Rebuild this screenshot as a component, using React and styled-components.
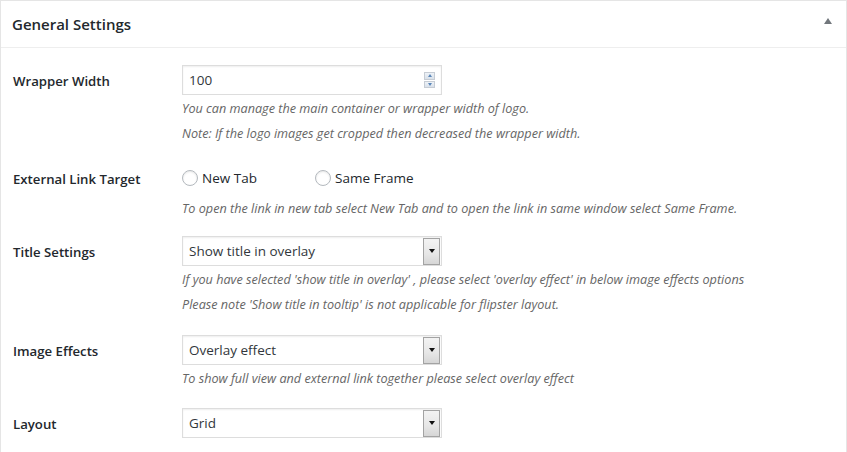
import React from "react";
import styled, { createGlobalStyle } from "styled-components";

const Global = createGlobalStyle`
  html, body { margin: 0; padding: 0; background: #fff; }
  body { font-family: "Open Sans", "Liberation Sans", sans-serif; color: #444; }
  * { box-sizing: border-box; }
`;

const Postbox = styled.div`
  width: 847px;
  min-height: 470px;
  border: 1px solid #e5e5e5;
  background: #fff;
`;

const Header = styled.div`
  height: 47px;
  border-bottom: 1px solid #eee;
  display: flex;
  align-items: center;
  justify-content: space-between;
  padding: 0 12px 0 11px;
`;

const Title = styled.h2`
  margin: 0;
  font-size: 15px;
  font-weight: 600;
  color: #23282d;
  letter-spacing: 0;
`;

const Toggle = styled.span`
  width: 0;
  height: 0;
  margin-top: -6px;
  margin-right: 2px;
  border-left: 4px solid transparent;
  border-right: 4px solid transparent;
  border-bottom: 6px solid #72777c;
`;

const Body = styled.div`
  padding: 0 12px;
`;

const Row = styled.div`
  display: grid;
  grid-template-columns: 169px 1fr;
  padding-top: ${(p) => p.$top}px;
`;

const Label = styled.div`
  height: 30px;
  display: flex;
  align-items: center;
  font-size: 13.2px;
  font-weight: 600;
  color: #23282d;
  padding-top: 2px;
`;

const FieldCol = styled.div`
  display: flex;
  flex-direction: column;
`;

const Box = styled.div`
  width: 260px;
  height: 30px;
  border: 1px solid #ddd;
  box-shadow: inset 0 1px 2px rgba(0, 0, 0, 0.07);
  background: #fff;
  display: flex;
  align-items: center;
  padding: 0 1px 0 6px;
  font-size: 13.5px;
  color: #32373c;
`;

const TextInput = styled.input`
  flex: 1;
  border: 0;
  outline: 0;
  padding: 0;
  background: transparent;
  font: inherit;
  color: inherit;
`;

const Spinner = styled.div`
  width: 11px;
  height: 16px;
  margin-right: 5px;
  display: flex;
  flex-direction: column;
  gap: 1px;
`;

const SpinBtn = styled.div`
  flex: 1;
  background: linear-gradient(#eef2f7, #d9e1ea);
  border: 1px solid #c6ccd4;
  display: flex;
  align-items: center;
  justify-content: center;
  &::after {
    content: "";
    border-left: 2.5px solid transparent;
    border-right: 2.5px solid transparent;
    ${(p) =>
      p.$up
        ? "border-bottom: 3px solid #5a86b8;"
        : "border-top: 3px solid #5a86b8;"}
  }
`;

const SelectText = styled.span`
  flex: 1;
`;

const ArrowBtn = styled.div`
  width: 17px;
  height: 27px;
  border: 1px solid #a3a3a3;
  background: linear-gradient(#f3f3f3, #e6e6e6 60%, #d6d6d6);
  display: flex;
  align-items: center;
  justify-content: center;
  &::after {
    content: "";
    border-left: 3.5px solid transparent;
    border-right: 3.5px solid transparent;
    border-top: 4px solid #111;
    margin-top: -1px;
  }
`;

const Desc = styled.p`
  margin: ${(p) => p.$mt ?? 1}px 0 0;
  font-size: 12.65px;
  line-height: 24px;
  font-style: italic;
  color: #666;
  white-space: nowrap;
`;

const RadioLine = styled.div`
  height: 30px;
  display: flex;
  align-items: center;
`;

const RadioItem = styled.label`
  width: ${(p) => p.$w || "auto"};
  display: flex;
  align-items: center;
  gap: 4px;
  font-size: 13.5px;
  font-weight: 500;
  color: #23282d;
`;

const RadioCircle = styled.span`
  width: 16px;
  height: 16px;
  border-radius: 50%;
  border: 1px solid #b4b9be;
  box-shadow: inset 0 1px 2px rgba(0, 0, 0, 0.1);
  background: #fff;
`;

const Select = ({ value }) => (
  <Box>
    <SelectText>{value}</SelectText>
    <ArrowBtn />
  </Box>
);

export default function App() {
  return (
    <>
      <Global />
      <Postbox>
        <Header>
          <Title>General Settings</Title>
          <Toggle />
        </Header>
        <Body>
          <Row $top={17}>
            <Label>Wrapper Width</Label>
            <FieldCol>
              <Box>
                <TextInput defaultValue="100" />
                <Spinner>
                  <SpinBtn $up />
                  <SpinBtn />
                </Spinner>
              </Box>
              <Desc>You can manage the main container or wrapper width of logo.</Desc>
              <Desc>Note: If the logo images get cropped then decreased the wrapper width.</Desc>
            </FieldCol>
          </Row>
          <Row $top={18}>
            <Label>External Link Target</Label>
            <FieldCol>
              <RadioLine>
                <RadioItem $w="133px">
                  <RadioCircle />
                  New Tab
                </RadioItem>
                <RadioItem>
                  <RadioCircle />
                  Same Frame
                </RadioItem>
              </RadioLine>
              <Desc $mt={3}>
                To open the link in new tab select New Tab and to open the link in same window select Same Frame.
              </Desc>
            </FieldCol>
          </Row>
          <Row $top={16}>
            <Label>Title Settings</Label>
            <FieldCol>
              <Select value="Show title in overlay" />
              <Desc>
                If you have selected 'show title in overlay' , please select 'overlay effect' in below image effects options
              </Desc>
              <Desc>Please note 'Show title in tooltip' is not applicable for flipster layout.</Desc>
            </FieldCol>
          </Row>
          <Row $top={19}>
            <Label>Image Effects</Label>
            <FieldCol>
              <Select value="Overlay effect" />
              <Desc>To show full view and external link together please select overlay effect</Desc>
            </FieldCol>
          </Row>
          <Row $top={18}>
            <Label>Layout</Label>
            <FieldCol>
              <Select value="Grid" />
            </FieldCol>
          </Row>
        </Body>
      </Postbox>
    </>
  );
}
